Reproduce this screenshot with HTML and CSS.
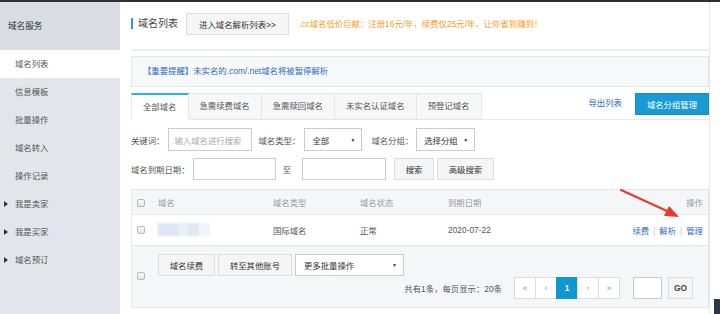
FILE: index.html
```html
<!DOCTYPE html>
<html lang="zh-CN">
<head>
    <meta charset="UTF-8">
    <title>域名列表</title>
    <link rel="stylesheet" href="styles.css">
</head>
<body>
    <div class="topbar"></div>
    <div class="layout">
        <div class="sidebar">
            <div class="side-title">域名服务</div>
            <div class="side-item active">域名列表</div>
            <div class="side-item">信息模板</div>
            <div class="side-item">批量操作</div>
            <div class="side-item">域名转入</div>
            <div class="side-item">操作记录</div>
            <div class="side-item fold">我是卖家</div>
            <div class="side-item fold">我是买家</div>
            <div class="side-item fold">域名预订</div>
        </div>

        <div class="main">
            <div class="page-head">
                <div class="head-title">域名列表</div>
                <button class="btn btn-head">进入域名解析列表&gt;&gt;</button>
                <div class="promo">.cc域名低价巨献：注册16元/年，续费仅25元/年，让你省到赚到！</div>
            </div>

            <div class="notice">【重要提醒】未实名的.com/.net域名将被暂停解析</div>

            <div class="tabs">
                <div class="tab active">全部域名</div>
                <div class="tab">急需续费域名</div>
                <div class="tab">急需赎回域名</div>
                <div class="tab">未实名认证域名</div>
                <div class="tab">预登记域名</div>
                <div class="tabs-right">
                    <a class="link export">导出列表</a>
                    <button class="btn-primary">域名分组管理</button>
                </div>
            </div>

            <div class="filter-row">
                <span class="lbl">关键词：</span>
                <div class="input kw">输入域名进行搜索</div>
                <span class="lbl ml7">域名类型：</span>
                <div class="select sel-type">全部<span class="caret">▼</span></div>
                <span class="lbl ml9">域名分组：</span>
                <div class="select sel-group">选择分组<span class="caret">▼</span></div>
            </div>

            <div class="filter-row row2">
                <span class="lbl">域名到期日期：</span>
                <div class="input date"></div>
                <span class="lbl to">至</span>
                <div class="input date date2"></div>
                <button class="btn btn-search">搜索</button>
                <button class="btn btn-adv">高级搜索</button>
            </div>

            <div class="grid-box">
                <table class="grid">
                    <colgroup>
                        <col style="width:26px">
                        <col style="width:115px">
                        <col style="width:87px">
                        <col style="width:88px">
                        <col>
                        <col style="width:110px">
                    </colgroup>
                    <thead>
                        <tr>
                            <th class="ck"><span class="checkbox"></span></th>
                            <th>域名</th>
                            <th>域名类型</th>
                            <th>域名状态</th>
                            <th>到期日期</th>
                            <th class="op">操作</th>
                        </tr>
                    </thead>
                    <tbody>
                        <tr>
                            <td class="ck"><span class="checkbox"></span></td>
                            <td><span class="masked"></span></td>
                            <td>国际域名</td>
                            <td>正常</td>
                            <td>2020-07-22</td>
                            <td class="op"><a class="link">续费</a><span class="sep">|</span><a class="link">解析</a><span class="sep">|</span><a class="link">管理</a></td>
                        </tr>
                    </tbody>
                </table>

                <div class="grid-foot">
                    <div class="foot-ck"><span class="checkbox"></span></div>
                    <div class="foot-body">
                        <div class="batch">
                            <button class="btn btn-renew">域名续费</button>
                            <button class="btn btn-move">转至其他账号</button>
                            <div class="select sel-batch">更多批量操作<span class="caret">▼</span></div>
                        </div>
                        <div class="pager-row">
                            <span class="total">共有1条，每页显示：20条</span>
                            <div class="pager">
                                <span class="pg">«</span>
                                <span class="pg">‹</span>
                                <span class="pg current">1</span>
                                <span class="pg">›</span>
                                <span class="pg">»</span>
                            </div>
                            <div class="input page-input"></div>
                            <button class="btn btn-go">GO</button>
                        </div>
                    </div>
                </div>
            </div>
        </div>
    </div>

    <svg class="arrow" width="720" height="314" viewBox="0 0 720 314">
        <line x1="621" y1="190" x2="667" y2="211" stroke="#e8392e" stroke-width="2.2" stroke-linecap="round"/>
        <polygon points="679,217 664,216 669,206" fill="#e8392e"/>
    </svg>
    <div class="corner-widget"></div>
</body>
</html>
```

FILE: styles.css
```css
* {
    margin: 0;
    padding: 0;
    box-sizing: border-box;
}

body {
    font-family: "Liberation Sans", "Noto Sans CJK SC", sans-serif;
    font-size: 8.4px;
    color: #555;
    background: #fff;
    height: 314px;
    overflow: hidden;
    position: relative;
}

button {
    font-family: inherit;
    font-size: 8.4px;
    cursor: pointer;
}

.topbar {
    height: 2px;
    background: #2c3036;
}

.layout {
    display: flex;
    height: 312px;
}

/* sidebar */
.sidebar {
    width: 120px;
    background: #e2e6eb;
}

.side-title {
    height: 48px;
    line-height: 48px;
    padding-left: 8px;
    background: #d9dde3;
    color: #333;
    font-size: 8.6px;
}

.side-item {
    height: 28px;
    line-height: 28px;
    padding-left: 15px;
    position: relative;
    color: #555;
}

.side-item.active {
    background: #fff;
}

.side-item.fold::before {
    content: "";
    position: absolute;
    left: 4px;
    top: 11px;
    border-left: 4px solid #333;
    border-top: 3px solid transparent;
    border-bottom: 3px solid transparent;
}

/* main */
.main {
    flex: 1;
    margin-right: 10px;
    border-right: 1px solid #e6e6e6;
    padding: 0 0 0 11px;
}

.page-head {
    height: 49px;
    padding-top: 11px;
    display: flex;
    align-items: flex-start;
    border-bottom: 2px solid #eee;
}

.head-title {
    margin-top: 5px;
    border-left: 2px solid #3b8fe0;
    padding-left: 5px;
    height: 11px;
    line-height: 11px;
    font-size: 10px;
    color: #444;
}

.btn {
    background: #f5f5f5;
    border: 1px solid #ddd;
    color: #333;
    height: 22px;
}

.btn-head {
    margin-left: 8px;
    width: 103px;
}

.promo {
    margin-left: 10px;
    line-height: 22px;
    color: #ff9a1a;
}

.notice {
    margin-top: 5px;
    height: 31px;
    line-height: 29px;
    background: #f7f8fa;
    border: 1px solid #e4e7eb;
    padding-left: 11px;
    color: #2a6cc0;
}

/* tabs */
.tabs {
    margin-top: 6px;
    display: flex;
    height: 27px;
    border-bottom: 1px solid #e8e8e8;
}

.tab {
    height: 27px;
    line-height: 25px;
    padding: 0 11px;
    background: #f7f7f7;
    border: 1px solid #e6e6e6;
    border-left: none;
    color: #555;
}

.tab.active {
    background: #fff;
    border-left: 1px solid #e6e6e6;
    border-top: 2px solid #2bb3d8;
    line-height: 24px;
    border-bottom-color: #fff;
}

.tabs-right {
    margin-left: auto;
    display: flex;
    align-items: flex-start;
}

.link {
    color: #2a6cc0;
    text-decoration: none;
}

.export {
    line-height: 20px;
}

.btn-primary {
    margin-left: 13px;
    width: 74px;
    height: 22px;
    background: #1a9ad2;
    border: 1px solid #148cc0;
    color: #fff;
}

/* filters */
.filter-row {
    display: flex;
    align-items: center;
    margin-top: 8px;
    height: 23px;
}

.filter-row.row2 {
    margin-top: 7px;
    height: 22px;
}

.lbl {
    color: #555;
}

.ml7 {
    margin-left: 7px;
}

.ml9 {
    margin-left: 9px;
}

.input {
    height: 100%;
    background: #fff;
    border: 1px solid #ccc;
    color: #aaa;
    padding-left: 6px;
    display: flex;
    align-items: center;
}

.kw {
    margin-left: 3px;
    width: 84px;
}

.select {
    height: 100%;
    background: #fff;
    border: 1px solid #ccc;
    color: #333;
    padding: 0 6px 0 7px;
    display: flex;
    align-items: center;
    justify-content: space-between;
}

.caret {
    font-size: 5px;
    color: #333;
}

.sel-type {
    margin-left: 4px;
    width: 58px;
}

.sel-group {
    margin-left: 3px;
    width: 59px;
}

.date {
    margin-left: 3px;
    width: 83px;
}

.to {
    margin-left: 7px;
}

.date2 {
    margin-left: 11px;
    width: 84px;
}

.btn-search {
    margin-left: 8px;
    width: 40px;
}

.btn-adv {
    margin-left: 3px;
    width: 57px;
}

/* grid */
.grid-box {
    margin-top: 9px;
    border: 1px solid #e4e7eb;
    background: #f5f6f8;
}

.grid {
    width: 100%;
    border-collapse: collapse;
    table-layout: fixed;
}

.grid th {
    height: 24px;
    font-weight: normal;
    text-align: left;
    color: #999;
}

.grid td {
    height: 31px;
    background: #fff;
    color: #555;
    border-top: 1px solid #e8e8e8;
    border-bottom: 1px solid #e8e8e8;
}

.grid .ck {
    padding-left: 5px;
}

.grid .op {
    text-align: right;
    padding-right: 5px;
}

.checkbox {
    display: inline-block;
    width: 8px;
    height: 8px;
    border: 1px solid #b9b9b9;
    border-radius: 2px;
    background: linear-gradient(#fafafa, #e6e6e6);
    vertical-align: middle;
}

.masked {
    display: inline-block;
    width: 52px;
    height: 13px;
    vertical-align: middle;
    background: linear-gradient(to right, #dce5f3 0, #dce5f3 20px, #eaf0f8 20px, #eaf0f8 30px, #dfe7f4 30px, #dfe7f4 41px, #eff4fa 41px);
    filter: blur(0.8px);
}

.sep {
    color: #c8c8c8;
    margin: 0 4px;
}

.grid-foot {
    display: flex;
    height: 61px;
}

.foot-ck {
    width: 26px;
    padding-left: 5px;
    display: flex;
    align-items: center;
}

.foot-body {
    flex: 1;
    padding-top: 8px;
    padding-right: 15px;
}

.batch {
    display: flex;
    height: 22px;
}

.btn-renew {
    width: 57px;
}

.btn-move {
    margin-left: 3px;
    width: 74px;
}

.sel-batch {
    margin-left: 3px;
    width: 109px;
    padding-left: 8px;
}

.pager-row {
    margin-top: 1px;
    display: flex;
    align-items: center;
    justify-content: flex-end;
    height: 22px;
}

.total {
    color: #555;
}

.pager {
    margin-left: 13px;
    display: flex;
    height: 22px;
}

.pg {
    width: 22px;
    height: 22px;
    border: 1px solid #ddd;
    margin-left: -1px;
    background: #fff;
    color: #999;
    display: flex;
    align-items: center;
    justify-content: center;
}

.pg.current {
    background: #0f97cf;
    border-color: #0f97cf;
    color: #fff;
    font-weight: bold;
}

.page-input {
    margin-left: 13px;
    width: 29px;
}

.btn-go {
    margin-left: 6px;
    width: 25px;
    font-weight: bold;
    color: #444;
}

/* overlays */
.arrow {
    position: absolute;
    left: 0;
    top: 0;
    pointer-events: none;
}

.corner-widget {
    position: absolute;
    left: 714px;
    top: 299px;
    width: 6px;
    height: 15px;
    background: #2a3744;
}
```
